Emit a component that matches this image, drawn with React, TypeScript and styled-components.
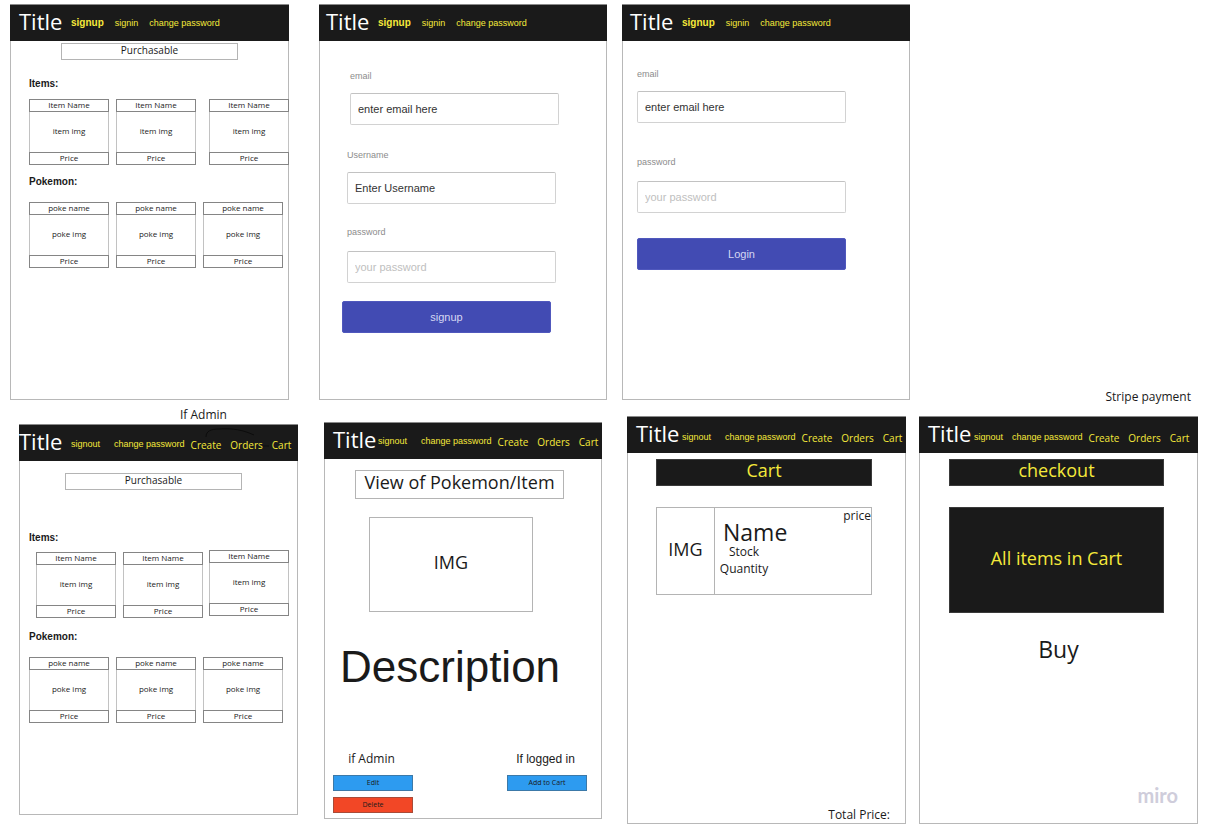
import React from "react";
import styled, { createGlobalStyle } from "styled-components";

const sans = `"Open Sans", "Noto Sans", sans-serif`;
const arial = `"Liberation Sans", Arial, sans-serif`;
const ink = "#1a1a1a";
const yellow = "#f5e93a";

const GlobalStyle = createGlobalStyle`
  * { box-sizing: border-box; }
  body { margin: 0; background: #fff; color: ${ink}; font-family: ${sans}; }
  h1, h2, h3, p { margin: 0; font-weight: 400; }
  button, input { font: inherit; margin: 0; }
`;

const Board = styled.main`
  display: flex;
  flex-direction: column;
`;

const TopRow = styled.div`
  display: flex;
  align-items: flex-start;
  padding: 4px 0 0 10px;
`;

const BottomRow = styled.div`
  display: flex;
  align-items: flex-start;
  padding: 0 7px 0 19px;
`;

const Column = styled.div<{ $grow: number; $left?: number; $top?: number }>`
  flex: ${(p) => p.$grow} 1 0;
  min-width: 0;
  margin-left: ${(p) => p.$left ?? 0}px;
  padding-top: ${(p) => p.$top ?? 0}px;
`;

const Frame = styled.section<{ $height: number }>`
  display: flex;
  flex-direction: column;
  min-height: ${(p) => p.$height}px;
`;

const FrameBody = styled.div`
  flex: 1;
  display: flex;
  flex-direction: column;
  border: 1px solid #b8b8b8;
  border-top: 0;
`;

const Note = styled.p<{ $font?: string }>`
  font-family: ${(p) => p.$font ?? sans};
  font-size: 12px;
  line-height: 16px;
  white-space: nowrap;
`;

const SideNote = styled(Note)`
  padding: 385px 14px 1px 0;
  text-align: right;
`;

const AdminNote = styled(Note)`
  padding-left: 161px;
  margin-bottom: 1px;
`;

const Header = styled.header<{ $left: number }>`
  position: relative;
  display: flex;
  align-items: center;
  height: 37px;
  padding-left: ${(p) => p.$left}px;
  background: ${ink};
  border-top: 1px solid #8a8a8a;
`;

const Logo = styled.h1`
  width: 44px;
  padding-bottom: 5px;
  color: #fff;
  font-size: 22px;
  line-height: 30px;
  white-space: nowrap;
`;

const Nav = styled.nav<{ $left: number; $gap: number; $top?: number }>`
  display: flex;
  align-items: center;
  gap: ${(p) => p.$gap}px;
  padding-top: ${(p) => p.$top ?? 0}px;
  margin-left: ${(p) => p.$left}px;
`;

const NavLink = styled.a<{ $strong?: boolean; $sans?: boolean }>`
  color: ${yellow};
  font-family: ${(p) => (p.$sans ? sans : arial)};
  font-size: ${(p) => (p.$strong || p.$sans ? 10 : 9)}px;
  font-weight: ${(p) => (p.$strong ? 700 : 400)};
  line-height: 12px;
  text-decoration: none;
  white-space: nowrap;
`;

const Scribble = styled.svg`
  position: absolute;
  left: 186px;
  top: 3px;
  width: 84px;
  height: 20px;
`;

const Panel = styled.div<{
  $m: string;
  $h: number;
  $small?: boolean;
  $dark?: boolean;
}>`
  display: flex;
  align-items: center;
  justify-content: center;
  height: ${(p) => p.$h}px;
  margin: ${(p) => p.$m};
  padding-bottom: ${(p) => (p.$small ? 3 : 5)}px;
  border: 1px solid ${(p) => (p.$dark ? "#3a3a3a" : "#b4b4b4")};
  background: ${(p) => (p.$dark ? ink : "transparent")};
  color: ${(p) => (p.$dark ? yellow : ink)};
  font-size: ${(p) => (p.$small ? 10 : 18)}px;
  line-height: 1;
  white-space: nowrap;
`;

const PanelTitle = styled.h2`
  font-size: inherit;
`;

const GroupTitle = styled.h3<{ $m: string }>`
  margin: ${(p) => p.$m};
  font-family: ${arial};
  font-size: 10px;
  font-weight: 700;
  line-height: 12px;
`;

const CardRow = styled.div<{ $m: string; $gap?: number }>`
  display: flex;
  align-items: flex-start;
  gap: ${(p) => p.$gap ?? 7}px;
  margin: ${(p) => p.$m};
`;

const CardPair = styled.div<{ $top?: number }>`
  flex: 167 1 0;
  display: flex;
  gap: 7px;
  padding-top: ${(p) => p.$top ?? 0}px;
`;

const CardBox = styled.article`
  flex: 80 1 0;
  display: grid;
  grid-template-rows: 13px 40px 13px;
  font-size: 8px;
  line-height: 10px;
  text-align: center;
  white-space: nowrap;
`;

const CardEdge = styled.div`
  border: 1px solid #858585;
`;

const CardImage = styled.div`
  display: flex;
  align-items: center;
  justify-content: center;
  padding-bottom: 2px;
  border: solid #c2c2c2;
  border-width: 0 1px;
`;

function Card({ name, img }: { name: string; img: string }) {
  return (
    <CardBox>
      <CardEdge>{name}</CardEdge>
      <CardImage>{img}</CardImage>
      <CardEdge>Price</CardEdge>
    </CardBox>
  );
}

function Cards(props: {
  kind: "item" | "poke";
  m: string;
  gap?: number;
  pairTop?: number;
}) {
  const name = props.kind === "item" ? "Item Name" : "poke name";
  const img = `${props.kind} img`;
  return (
    <CardRow $m={props.m} $gap={props.gap}>
      <CardPair $top={props.pairTop}>
        <Card name={name} img={img} />
        <Card name={name} img={img} />
      </CardPair>
      <Card name={name} img={img} />
    </CardRow>
  );
}

const Form = styled.form`
  display: flex;
  flex-direction: column;
`;

const Field = styled.div<{ $m: string; $gap?: number }>`
  display: flex;
  flex-direction: column;
  gap: ${(p) => p.$gap ?? 11}px;
  margin: ${(p) => p.$m};
`;

const Label = styled.label`
  color: #8c8c8c;
  font-family: ${arial};
  font-size: 9px;
  line-height: 12px;
`;

const TextInput = styled.input`
  width: 100%;
  height: 32px;
  padding: 0 7px;
  border: 1px solid #d2d2d2;
  border-top-color: #c2c2c2;
  border-radius: 2px;
  background: #fff;
  color: #333;
  font-family: ${arial};
  font-size: 11px;
  &::placeholder { color: #c0c0c0; opacity: 1; }
`;

const Submit = styled.button<{ $m: string }>`
  height: 32px;
  margin: ${(p) => p.$m};
  padding: 0;
  border: 1px solid #5058bd;
  border-radius: 2px;
  background: #424bb3;
  color: #d5d7f2;
  font-family: ${arial};
  font-size: 11px;
`;

const Description = styled.p`
  margin: 30px 0 0 15px;
  font-family: ${arial};
  font-size: 44px;
  line-height: 50px;
`;

const Actions = styled.div`
  display: flex;
  justify-content: space-between;
  margin-top: 59px;
  padding: 0 14px 0 8px;
`;

const ActionColumn = styled.div`
  display: flex;
  flex-direction: column;
  width: 80px;
  gap: 6px;
  text-align: center;
`;

const ActionNote = styled(Note)`
  margin-bottom: 2px;
  padding-right: 3px;
`;

const ActionButton = styled.button<{ $color: string }>`
  height: 16px;
  padding: 0;
  border: 1px solid rgba(80, 80, 80, 0.45);
  background: ${(p) => p.$color};
  color: ${ink};
  font-size: 7px;
  line-height: 12px;
`;

const CartItem = styled.article`
  display: flex;
  height: 88px;
  margin: 21px 33px 0 28px;
  border: 1px solid #b4b4b4;
`;

const CartThumb = styled.div`
  display: flex;
  align-items: center;
  justify-content: center;
  width: 58px;
  padding-bottom: 5px;
  border-right: 1px solid #b4b4b4;
  font-size: 18px;
`;

const CartInfo = styled.div`
  padding: 13px 0 0 4px;
`;

const CartName = styled.h2`
  padding-left: 4px;
  font-size: 23px;
  line-height: 22px;
`;

const CartMeta = styled.div`
  width: 50px;
  font-size: 12px;
  line-height: 17px;
  text-align: center;
`;

const CartPrice = styled(Note)`
  margin-left: auto;
`;

const Total = styled(Note)`
  margin-top: auto;
  padding-right: 15px;
  text-align: right;
`;

const BuyButton = styled.button`
  align-self: center;
  margin-top: 21px;
  padding: 0;
  border: 0;
  background: none;
  color: ${ink};
  font-size: 23px;
  line-height: 30px;
`;

const Brand = styled.div`
  margin-top: auto;
  padding: 0 19px 16px 0;
  color: #cfcddb;
  font-family: Lato, sans-serif;
  font-size: 20px;
  font-weight: 700;
  line-height: 24px;
  text-align: right;
`;

function GuestHeader({ left }: { left: number }) {
  return (
    <Header $left={left}>
      <Logo>Title</Logo>
      <Nav $left={8} $gap={11}>
        <NavLink href="#signup" $strong>signup</NavLink>
        <NavLink href="#signin">signin</NavLink>
        <NavLink href="#password">change password</NavLink>
      </Nav>
    </Header>
  );
}

function MemberHeader(props: {
  left: number;
  gap: number;
  split: number;
  top?: number;
  children?: React.ReactNode;
}) {
  return (
    <Header $left={props.left}>
      <Logo>Title</Logo>
      <Nav $left={props.gap} $gap={props.split} $top={props.top}>
        <NavLink href="#signout">signout</NavLink>
        <NavLink href="#password">change password</NavLink>
      </Nav>
      <Nav $left={6} $gap={9} $top={(props.top ?? 0) + 1}>
        <NavLink href="#create" $sans>Create</NavLink>
        <NavLink href="#orders" $sans>Orders</NavLink>
        <NavLink href="#cart" $sans>Cart</NavLink>
      </Nav>
      {props.children}
    </Header>
  );
}

export default function App() {
  return (
    <>
      <GlobalStyle />
      <Board>
        <TopRow>
          <Column $grow={279}>
            <Frame $height={396}>
              <GuestHeader left={9} />
              <FrameBody>
                <Panel $m="2px 50px 0" $h={17} $small>Purchasable</Panel>
                <GroupTitle $m="18px 0 0 18px">Items:</GroupTitle>
                <Cards kind="item" m="9px -1px 0 18px" gap={13} />
                <GroupTitle $m="11px 0 0 18px">Pokemon:</GroupTitle>
                <Cards kind="poke" m="14px 5px 0 18px" />
              </FrameBody>
            </Frame>
          </Column>

          <Column $grow={288} $left={30}>
            <Frame $height={396}>
              <GuestHeader left={7} />
              <FrameBody>
                <Form>
                  <Field $m="29px 47px 0 30px">
                    <Label htmlFor="su-email">email</Label>
                    <TextInput id="su-email" defaultValue="enter email here" />
                  </Field>
                  <Field $m="24px 50px 0 27px">
                    <Label htmlFor="su-name">Username</Label>
                    <TextInput id="su-name" defaultValue="Enter Username" />
                  </Field>
                  <Field $m="22px 50px 0 27px" $gap={13}>
                    <Label htmlFor="su-pass">password</Label>
                    <TextInput id="su-pass" type="password" placeholder="your password" />
                  </Field>
                  <Submit type="button" $m="18px 55px 0 22px">signup</Submit>
                </Form>
              </FrameBody>
            </Frame>
          </Column>

          <Column $grow={288} $left={15}>
            <Frame $height={396}>
              <GuestHeader left={8} />
              <FrameBody>
                <Form>
                  <Field $m="27px 63px 0 14px">
                    <Label htmlFor="in-email">email</Label>
                    <TextInput id="in-email" defaultValue="enter email here" />
                  </Field>
                  <Field $m="33px 63px 0 14px" $gap={13}>
                    <Label htmlFor="in-pass">password</Label>
                    <TextInput id="in-pass" type="password" placeholder="your password" />
                  </Field>
                  <Submit type="button" $m="25px 63px 0 14px">Login</Submit>
                </Form>
              </FrameBody>
            </Frame>
          </Column>

          <Column $grow={295}>
            <SideNote>Stripe payment</SideNote>
          </Column>
        </TopRow>

        <BottomRow>
          <Column $grow={279} $top={1}>
            <AdminNote>If Admin</AdminNote>
            <Frame $height={391}>
              <MemberHeader left={0} gap={8} split={14} top={2}>
                <Scribble viewBox="0 0 84 20" fill="none" stroke="#0c0c0c" aria-hidden="true">
                  <path d="M1 9C1 3 6 1 14 1C28 0 38 2 49 7M58 18H64" />
                </Scribble>
              </MemberHeader>
              <FrameBody>
                <Panel $m="12px 55px 0 45px" $h={17} $small>Purchasable</Panel>
                <GroupTitle $m="42px 0 0 9px">Items:</GroupTitle>
                <Cards kind="item" m="6px 8px 0 16px" gap={6} pairTop={2} />
                <GroupTitle $m="13px 0 0 9px">Pokemon:</GroupTitle>
                <Cards kind="poke" m="14px 14px 0 9px" />
              </FrameBody>
            </Frame>
          </Column>

          <Column $grow={278} $left={26} $top={16}>
            <Frame $height={397}>
              <MemberHeader left={9} gap={1} split={14} />
              <FrameBody>
                <Panel $m="11px 37px 0 30px" $h={29}>
                  <PanelTitle>View of Pokemon/Item</PanelTitle>
                </Panel>
                <Panel $m="18px 68px 0 44px" $h={95}>IMG</Panel>
                <Description>Description</Description>
                <Actions>
                  <ActionColumn>
                    <ActionNote>if Admin</ActionNote>
                    <ActionButton type="button" $color="#2d9bf0">Edit</ActionButton>
                    <ActionButton type="button" $color="#f24726">Delete</ActionButton>
                  </ActionColumn>
                  <ActionColumn>
                    <ActionNote $font={arial}>If logged in</ActionNote>
                    <ActionButton type="button" $color="#2d9bf0">Add to Cart</ActionButton>
                  </ActionColumn>
                </Actions>
              </FrameBody>
            </Frame>
          </Column>

          <Column $grow={279} $left={25} $top={10}>
            <Frame $height={408}>
              <MemberHeader left={9} gap={2} split={14} top={4} />
              <FrameBody>
                <Panel $m="6px 33px 0 28px" $h={27} $dark>
                  <PanelTitle>Cart</PanelTitle>
                </Panel>
                <CartItem>
                  <CartThumb>IMG</CartThumb>
                  <CartInfo>
                    <CartName>Name</CartName>
                    <CartMeta>Stock</CartMeta>
                    <CartMeta>Quantity</CartMeta>
                  </CartInfo>
                  <CartPrice>price</CartPrice>
                </CartItem>
                <Total>Total Price:</Total>
              </FrameBody>
            </Frame>
          </Column>

          <Column $grow={279} $left={13} $top={10}>
            <Frame $height={408}>
              <MemberHeader left={9} gap={2} split={9} top={4} />
              <FrameBody>
                <Panel $m="6px 33px 0 29px" $h={27} $dark>
                  <PanelTitle>checkout</PanelTitle>
                </Panel>
                <Panel $m="21px 33px 0 29px" $h={106} $dark>All items in Cart</Panel>
                <BuyButton type="button">Buy</BuyButton>
                <Brand>miro</Brand>
              </FrameBody>
            </Frame>
          </Column>
        </BottomRow>
      </Board>
    </>
  );
}
